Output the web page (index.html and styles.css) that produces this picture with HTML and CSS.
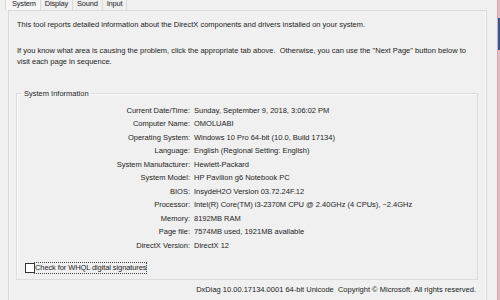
FILE: index.html
```html
<!DOCTYPE html>
<html lang="en">
<head>
	<meta charset="UTF-8">
	<title>DirectX Diagnostic Tool</title>
	<link rel="stylesheet" href="styles.css">
</head>
<body>
	<div id="window">
		<div id="dialog">
			<div class="tabs">
				<span class="tab tab-current">System</span>
				<span class="tab">Display</span>
				<span class="tab">Sound</span>
				<span class="tab">Input</span>
			</div>
			<div class="panel">
				<p class="intro">This tool reports detailed information about the DirectX components and drivers installed on your system.</p>
				<p class="intro intro-next">If you know what area is causing the problem, click the appropriate tab above.&nbsp; Otherwise, you can use the "Next Page" button below to visit each page in sequence.</p>

				<fieldset class="group">
					<legend>System Information</legend>
					<div class="info">
						<span class="lbl">Current Date/Time:</span><span>Sunday, September 9, 2018, 3:06:02 PM</span>
						<span class="lbl">Computer Name:</span><span>OMOLUABI</span>
						<span class="lbl">Operating System:</span><span>Windows 10 Pro 64-bit (10.0, Build 17134)</span>
						<span class="lbl">Language:</span><span>English (Regional Setting: English)</span>
						<span class="lbl">System Manufacturer:</span><span>Hewlett-Packard</span>
						<span class="lbl">System Model:</span><span>HP Pavilion g6 Notebook PC</span>
						<span class="lbl">BIOS:</span><span>InsydeH2O Version 03.72.24F.12</span>
						<span class="lbl">Processor:</span><span>Intel(R) Core(TM) i3-2370M CPU @ 2.40GHz (4 CPUs), ~2.4GHz</span>
						<span class="lbl">Memory:</span><span>8192MB RAM</span>
						<span class="lbl">Page file:</span><span>7574MB used, 1921MB available</span>
						<span class="lbl">DirectX Version:</span><span>DirectX 12</span>
					</div>
					<label class="check">
						<span class="box"></span>
						<span class="focus">Check for WHQL digital signatures</span>
					</label>
				</fieldset>

				<div class="footer">DxDiag 10.00.17134.0001 64-bit Unicode&nbsp; Copyright © Microsoft. All rights reserved.</div>
			</div>
		</div>
		<div class="frame">
			<div class="frame-blue"></div>
		</div>
	</div>
</body>
</html>
```

FILE: styles.css
```css
html, body {
	margin: 0;
	background: #f0f0f0;
}

body {
	width: 500px;
	height: 300px;
	overflow: hidden;
	font-family: "Liberation Sans", Arial, sans-serif;
	font-size: 7.5px;
	color: #1c1c1c;
}

#window {
	display: flex;
	height: 300px;
}

#dialog {
	width: 497px;
}

.tabs {
	display: flex;
	height: 10px;
	padding-left: 5px;
	overflow: hidden;
}

.tab {
	line-height: 7px;
	padding: 0 4px;
	border-right: 1px solid #dadada;
	letter-spacing: -0.2px;
}

.tab-current {
	padding: 0 4px 0 6px;
	background: #f6f6f6;
	border-left: 1px solid #dadada;
}

.panel {
	margin-left: 8px;
	width: 479px;
	height: 290px;
	border: 1px solid #d9d9d9;
	border-bottom: none;
	box-shadow: inset -1px 0 #fbfbfb;
	padding-top: 7.5px;
	box-sizing: border-box;
}

.intro {
	margin: 0;
	padding-left: 8px;
	line-height: 11px;
}

.intro-next {
	margin-top: 15px;
	padding-right: 14px;
}

.group {
	margin: 21px 8px 0 7px;
	padding: 5px 0 6px 0;
	border: 1px solid #dcdcdc;
	box-shadow: inset 1px 1px #fbfbfb;
}

.group legend {
	margin-left: 5px;
	padding: 0 2px;
	line-height: 11px;
}

.info {
	display: grid;
	grid-template-columns: 173px 1fr;
	column-gap: 4px;
	line-height: 13.5px;
}

.lbl {
	text-align: right;
}

.check {
	display: flex;
	align-items: center;
	margin: 10.5px 0 0 8px;
	line-height: 10px;
}

.box {
	width: 8px;
	height: 8px;
	border: 1px solid #333;
	background: #fff;
}

.focus {
	outline: 1px dotted #444;
	letter-spacing: -0.1px;
}

.footer {
	margin-top: 4px;
	padding-right: 10px;
	text-align: right;
	line-height: 11px;
}

.frame {
	flex: 1;
	border-left: 1px solid #dba3ae;
	background: #e7b9c2;
}

.frame-blue {
	margin-top: 18px;
	height: 32px;
	background: #2d5c97;
}
```
